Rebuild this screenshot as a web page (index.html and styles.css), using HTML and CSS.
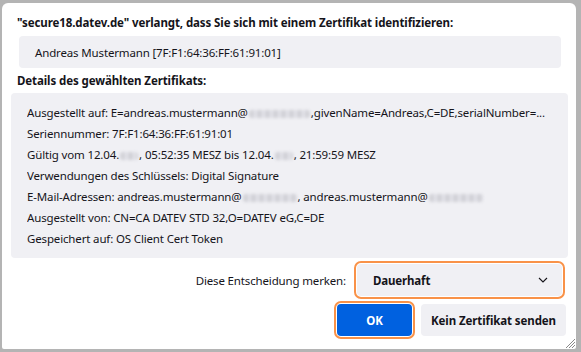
FILE: index.html
```html
<!DOCTYPE html>
<html lang="de">
<head>
<meta charset="utf-8">
<title>Zertifikat</title>
<link rel="stylesheet" href="styles.css">
</head>
<body>
<div class="window">
  <h1 class="title">"secure18.datev.de" verlangt, dass Sie sich mit einem Zertifikat identifizieren:</h1>
  <div class="cert-list">
    <div class="cert-item">Andreas Mustermann [7F:F1:64:36:FF:61:91:01]</div>
  </div>
  <h2 class="subtitle">Details des gewählten Zertifikats:</h2>
  <div class="details">
    <div class="line">Ausgestellt auf: E=andreas.mustermann@<span class="blur w1"></span>,givenName=Andreas,C=DE,serialNumber=...</div>
    <div class="line">Seriennummer: 7F:F1:64:36:FF:61:91:01</div>
    <div class="line">Gültig vom 12.04.<span class="blur w2"></span>, 05:52:35 MESZ bis 12.04.<span class="blur w2"></span>, 21:59:59 MESZ</div>
    <div class="line">Verwendungen des Schlüssels: Digital Signature</div>
    <div class="line">E-Mail-Adressen: andreas.mustermann@<span class="blur w3"></span>, andreas.mustermann@<span class="blur w3"></span></div>
    <div class="line">Ausgestellt von: CN=CA DATEV STD 32,O=DATEV eG,C=DE</div>
    <div class="line">Gespeichert auf: OS Client Cert Token</div>
  </div>
  <div class="remember">
    <span class="remember-label">Diese Entscheidung merken:</span>
    <div class="select focus">
      <span class="select-value">Dauerhaft</span>
      <svg class="chevron" width="10" height="6" viewBox="0 0 10 6"><path d="M1 1 L5 5 L9 1" fill="none" stroke="#15141a" stroke-width="1.1"/></svg>
    </div>
  </div>
  <div class="buttons">
    <button class="btn primary focus">OK</button>
    <button class="btn secondary">Kein Zertifikat senden</button>
  </div>
  <svg class="grip" width="12" height="12" viewBox="0 0 12 12">
    <path d="M11 2 L2 11 M11 5 L5 11 M11 8 L8 11" stroke="#8a8a8a" stroke-width="1"/>
  </svg>
</div>
</body>
</html>
```
FILE: styles.css
```css
html, body {
  margin: 0;
  padding: 0;
}
body {
  background: #b4b4b4;
  width: 581px;
  height: 352px;
  overflow: hidden;
  font-family: "Noto Sans", "Open Sans", sans-serif;
  font-size: 11.5px;
  letter-spacing: -0.15px;
  color: #15141a;
}
.window {
  position: relative;
  box-sizing: border-box;
  margin: 3px 5px 0 2px;
  height: 346px;
  background: #fff;
  border-radius: 6px 6px 2px 2px;
  padding: 11px 8px 0 9px;
  display: flex;
  flex-direction: column;
}
.title {
  margin: 0 0 0 6px;
  font-size: 11.5px;
  font-weight: 700;
  line-height: 17px;
  letter-spacing: -0.1px;
}
.cert-list {
  margin: 5px 7px 0 8px;
  background: #f0f0f4;
  border-radius: 4px;
  height: 32px;
  display: flex;
  align-items: center;
}
.cert-item {
  padding-left: 16px;
}
.subtitle {
  margin: 4px 0 0 6px;
  font-size: 11.5px;
  font-weight: 700;
  line-height: 17px;
  letter-spacing: -0.1px;
}
.details {
  margin-top: 4px;
  background: #f0f0f4;
  border-radius: 4px;
  padding: 9px 16px 9px 16px;
}
.line {
  line-height: 21px;
  white-space: nowrap;
  overflow: hidden;
}
.blur {
  display: inline-block;
  height: 8px;
  margin: 0 1px;
  vertical-align: -1px;
  background: repeating-linear-gradient(90deg, #d2d2d8 0 5px, #e2e2e8 5px 8px);
  border-radius: 3px;
  filter: blur(1.5px);
}
.w1 { width: 61px; }
.w2 { width: 18px; }
.w3 { width: 54px; }
.remember {
  margin-top: 6px;
  display: flex;
  justify-content: flex-end;
  align-items: center;
  gap: 11px;
  padding-right: 6px;
}
.select {
  box-sizing: border-box;
  width: 205px;
  height: 32px;
  background: #f0f0f4;
  border-radius: 4px;
  display: flex;
  align-items: center;
  justify-content: space-between;
  padding: 0 14px 0 16px;
  font-weight: 700;
}
.focus {
  outline: 2px solid #f99248;
  outline-offset: 1px;
}
.buttons {
  margin-top: 8px;
  display: flex;
  justify-content: flex-end;
  gap: 9px;
  padding-right: 2px;
}
.btn {
  font-family: inherit;
  font-size: 11.5px;
  letter-spacing: -0.1px;
  font-weight: 700;
  border: none;
  border-radius: 4px;
  height: 32px;
  padding: 0 6px;
  white-space: nowrap;
}
.primary {
  width: 75px;
  background: #0061e0;
  color: #fff;
}
.secondary {
  width: 145px;
  background: #f0f0f4;
  color: #15141a;
}
.grip {
  position: absolute;
  right: 0;
  bottom: 0;
}
```
